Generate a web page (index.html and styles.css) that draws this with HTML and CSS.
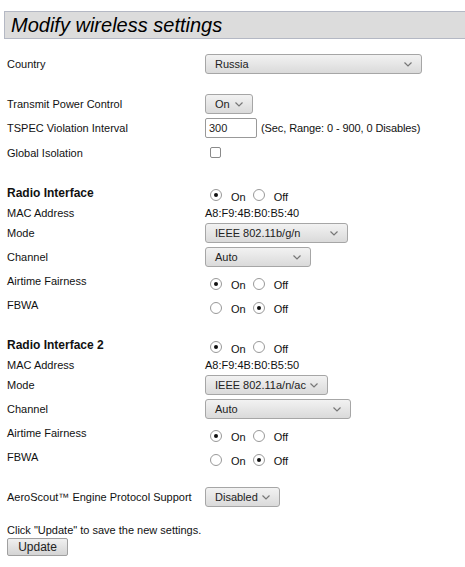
FILE: index.html
```html
<!DOCTYPE html>
<html>
<head>
<meta charset="utf-8">
<link rel="stylesheet" href="styles.css">
</head>
<body>
<div class="page">
  <h1 class="title">Modify wireless settings</h1>

  <div class="row first"><div class="lbl">Country</div><div class="ctl"><div class="sel w-country"><span>Russia</span><svg class="chev" width="8" height="5" viewBox="0 0 8 5"><path d="M0.5 0.5 L4 4 L7.5 0.5" fill="none" stroke="#777" stroke-width="1.2"/></svg></div></div></div>

  <div class="row gap"><div class="lbl">Transmit Power Control</div><div class="ctl"><div class="sel w-on"><span>On</span><svg class="chev" width="8" height="5" viewBox="0 0 8 5"><path d="M0.5 0.5 L4 4 L7.5 0.5" fill="none" stroke="#777" stroke-width="1.2"/></svg></div></div></div>

  <div class="row"><div class="lbl">TSPEC Violation Interval</div><div class="ctl"><div class="inp">300</div><span class="hint">(Sec, Range: 0 - 900, 0 Disables)</span></div></div>

  <div class="row tall"><div class="lbl">Global Isolation</div><div class="ctl"><span class="chk"></span></div></div>

  <div class="row head gap2"><div class="lbl bold">Radio Interface</div><div class="ctl radios"><span class="rad on"></span><span class="rt">On</span><span class="rad"></span><span class="rt">Off</span></div></div>
  <div class="row mac"><div class="lbl">MAC Address</div><div class="ctl">A8:F9:4B:B0:B5:40</div></div>
  <div class="row"><div class="lbl">Mode</div><div class="ctl"><div class="sel w-mode1"><span>IEEE 802.11b/g/n</span><svg class="chev" width="8" height="5" viewBox="0 0 8 5"><path d="M0.5 0.5 L4 4 L7.5 0.5" fill="none" stroke="#777" stroke-width="1.2"/></svg></div></div></div>
  <div class="row"><div class="lbl">Channel</div><div class="ctl"><div class="sel w-ch1"><span>Auto</span><svg class="chev" width="8" height="5" viewBox="0 0 8 5"><path d="M0.5 0.5 L4 4 L7.5 0.5" fill="none" stroke="#777" stroke-width="1.2"/></svg></div></div></div>
  <div class="row"><div class="lbl">Airtime Fairness</div><div class="ctl radios"><span class="rad on"></span><span class="rt">On</span><span class="rad"></span><span class="rt">Off</span></div></div>
  <div class="row"><div class="lbl">FBWA</div><div class="ctl radios"><span class="rad"></span><span class="rt">On</span><span class="rad on"></span><span class="rt">Off</span></div></div>

  <div class="row head gap3"><div class="lbl bold">Radio Interface 2</div><div class="ctl radios"><span class="rad on"></span><span class="rt">On</span><span class="rad"></span><span class="rt">Off</span></div></div>
  <div class="row mac"><div class="lbl">MAC Address</div><div class="ctl">A8:F9:4B:B0:B5:50</div></div>
  <div class="row"><div class="lbl">Mode</div><div class="ctl"><div class="sel w-mode2"><span>IEEE 802.11a/n/ac</span><svg class="chev" width="8" height="5" viewBox="0 0 8 5"><path d="M0.5 0.5 L4 4 L7.5 0.5" fill="none" stroke="#777" stroke-width="1.2"/></svg></div></div></div>
  <div class="row"><div class="lbl">Channel</div><div class="ctl"><div class="sel w-ch2"><span>Auto</span><svg class="chev" width="8" height="5" viewBox="0 0 8 5"><path d="M0.5 0.5 L4 4 L7.5 0.5" fill="none" stroke="#777" stroke-width="1.2"/></svg></div></div></div>
  <div class="row"><div class="lbl">Airtime Fairness</div><div class="ctl radios"><span class="rad on"></span><span class="rt">On</span><span class="rad"></span><span class="rt">Off</span></div></div>
  <div class="row"><div class="lbl">FBWA</div><div class="ctl radios"><span class="rad"></span><span class="rt">On</span><span class="rad on"></span><span class="rt">Off</span></div></div>

  <div class="row gap4"><div class="lbl">AeroScout™ Engine Protocol Support</div><div class="ctl"><div class="sel w-dis"><span>Disabled</span><svg class="chev" width="8" height="5" viewBox="0 0 8 5"><path d="M0.5 0.5 L4 4 L7.5 0.5" fill="none" stroke="#777" stroke-width="1.2"/></svg></div></div></div>

  <p class="note">Click "Update" to save the new settings.</p>
  <div class="btn">Update</div>
</div>
</body>
</html>
```
FILE: styles.css
```css
html, body { margin: 0; padding: 0; background: #fff; }
body { font-family: "Liberation Sans", Arial, sans-serif; font-size: 11px; color: #111; }
.page { padding: 11px 0 0 7px; }
.title {
  margin: 0 0 0 -3px;
  height: 28px;
  box-sizing: border-box;
  background: #dcdcdc;
  border: 1px solid #b4b8c4;
  border-right: none;
  font-size: 20px;
  font-style: italic;
  font-weight: normal;
  line-height: 26px;
  padding-left: 6px;
  color: #000;
}
.row { display: grid; grid-template-columns: 198px 1fr; align-items: center; height: 24px; }
.row.first { margin-top: 13px; }
.row.gap { margin-top: 16px; }
.row.tall { height: 25px; }
.row.gap2 { margin-top: 15px; }
.row.gap3 { margin-top: 15px; }
.row.gap4 { margin-top: 16px; }
.row.mac { height: 16px; }
.row.head { height: 25px; }
.lbl { white-space: nowrap; }
.bold { font-weight: bold; font-size: 12px; }
.ctl { display: flex; align-items: center; white-space: nowrap; }
.sel {
  box-sizing: border-box;
  height: 20px;
  border: 1px solid #a6a6a6;
  border-radius: 3px;
  background: linear-gradient(#f2f2f2, #dadada);
  display: flex;
  align-items: center;
  justify-content: space-between;
  padding: 0 9px 0 9px;
  color: #222;
  font-size: 11px;
}
.chev { display: block; }
.w-country { width: 217px; }
.w-on { width: 48px; }
.w-mode1 { width: 143px; }
.w-ch1 { width: 106px; }
.w-mode2 { width: 123px; }
.w-ch2 { width: 146px; }
.w-dis { width: 75px; }
.inp {
  box-sizing: border-box;
  width: 52px; height: 20px;
  border: 1px solid #999;
  border-radius: 2px;
  background: #fff;
  padding-left: 3px;
  line-height: 18px;
  color: #222;
}
.hint { margin-left: 4px; letter-spacing: -0.1px; }
.chk {
  display: block;
  width: 11px; height: 11px;
  box-sizing: border-box;
  border: 1px solid #8a8a8a;
  border-radius: 2px;
  margin-left: 5px;
  background: #fff;
}
.radios { padding-top: 8px; }
.rad {
  display: block;
  box-sizing: border-box;
  width: 12px; height: 12px;
  border: 1px solid #999;
  border-radius: 50%;
  background: #fff;
  margin-left: 5px;
  position: relative;
  margin-top: -3px;
}
.rad.on::after {
  content: "";
  position: absolute;
  left: 3px; top: 3px;
  width: 4px; height: 4px;
  border-radius: 50%;
  background: #111;
}
.rt { margin-left: 9px; margin-right: 0; }
.rt + .rad { margin-left: 7px; }
.note { margin: 15px 0 2px 0; }
.btn {
  box-sizing: border-box;
  width: 61px; height: 18px;
  border: 1px solid #a0a0a0;
  border-radius: 2px;
  background: linear-gradient(#f0f0f0, #d4d4d4);
  text-align: center;
  line-height: 16px;
  font-size: 12px;
  color: #222;
}
```
